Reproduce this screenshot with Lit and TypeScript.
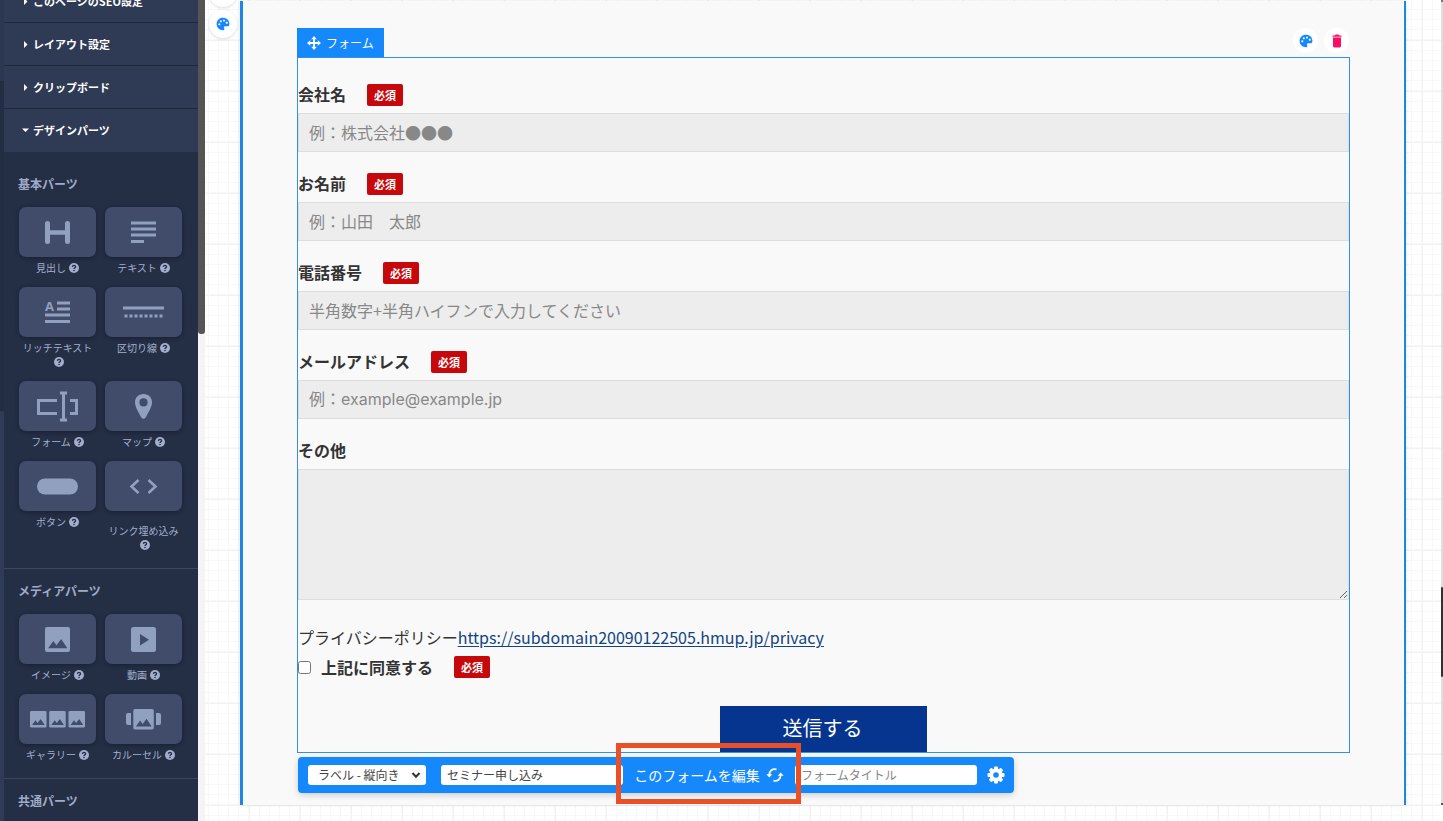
import { LitElement, html, svg, css, TemplateResult } from "lit";
import { customElement } from "lit/decorators.js";
import { classMap } from "lit/directives/class-map.js";

const JP = css`"Noto Sans CJK JP", "Liberation Sans", sans-serif`;

const picture = (x: number, y: number, s: number) => svg`
  <rect x=${x} y=${y} width=${s} height=${s} rx=${s / 12} fill="#92a0c0"></rect>
  <path transform="translate(${x} ${y}) scale(${s / 24})" d="M3 20.500 8 13.500 11 17.500 15.500 11.500 21.500 20.500Z" fill="#414c6b"></path>`;

const tileIcons: Record<string, TemplateResult> = {
  heading: svg`<path d="M28.500 16.500V34.500M48.500 16.500V34.500" stroke="#92a0c0" stroke-width="5" stroke-linecap="round"></path><path d="M28.500 25.500H48.500" stroke="#92a0c0" stroke-width="4.500"></path>`,
  text: svg`<path d="M26 16H51M26 22H51M26 28H51M26 34.500H39" stroke="#92a0c0" stroke-width="3"></path>`,
  rich: svg`<text x="26" y="23.500" class="glyph">A</text><path d="M38 16H51M38 22H51M26 28H51M26 34.500H51" stroke="#92a0c0" stroke-width="3"></path>`,
  divider: svg`<path d="M18 21H59" stroke="#92a0c0" stroke-width="3"></path><path d="M19.500 29H58" stroke="#92a0c0" stroke-width="3" stroke-dasharray="3 2"></path>`,
  form: svg`<path d="M38 19.500H19.500V32.500H38M51 19.500H57.500V32.500H51" stroke="#92a0c0" stroke-width="3" fill="none"></path><path d="M41 12H48M41 39H48M44.500 12V39" stroke="#92a0c0" stroke-width="3"></path>`,
  map: svg`<path fill-rule="evenodd" d="M38.500 13C33.500 13 30 16.500 30 21.500C30 25.500 33.500 31.500 36.300 36.500Q38.500 39 40.700 36.500C43.500 31.500 47 25.500 47 21.500C47 16.500 43.500 13 38.500 13ZM38.500 17.300A4.100 4.100 0 1 1 38.500 25.500A4.100 4.100 0 1 1 38.500 17.300Z" fill="#92a0c0"></path>`,
  button: svg`<rect x="18" y="17.500" width="41" height="16" rx="8" fill="#92a0c0"></rect>`,
  code: svg`<path d="M33.500 19 26.500 25.500 33.500 32M43.500 19 50.500 25.500 43.500 32" stroke="#92a0c0" stroke-width="2.600" fill="none"></path>`,
  image: picture(26, 13, 25),
  video: svg`<rect x="26" y="13" width="25" height="25" rx="2.500" fill="#92a0c0"></rect><path d="M35 20V31.500L44 25.700Z" fill="#414c6b"></path>`,
  gallery: svg`${picture(11, 17, 16.5)}${picture(30.2, 17, 16.5)}${picture(49.5, 17, 16.5)}`,
  carousel: svg`<path d="M26 19H23Q21 19 21 21V29Q21 31 23 31H26ZM51 19H54Q56 19 56 21V29Q56 31 54 31H51Z" fill="#92a0c0"></path>${picture(28.3, 15, 20.5)}`,
};

const palette = html`<svg class="palette" viewBox="0 0 14 14" aria-hidden="true"><path fill-rule="evenodd" d="M7 .8C3.200.8.600 3.500.600 7C.600 10.500 3.500 13.200 7 13.200C8.200 13.200 8.600 12.200 8.200 11.400C7.600 10.200 8 9.300 9.300 9.300H11.500C12.700 9.300 13.400 8.400 13.400 7C13.400 3.300 10.600.8 7 .8ZM3.300 6.200a1.050 1.050 0 1 0 .01 0ZM4.800 3.200a1.050 1.050 0 1 0 .01 0ZM8 2.500a1.050 1.050 0 1 0 .01 0ZM10.800 4.600a1.050 1.050 0 1 0 .01 0Z" fill="#1589fb"></path></svg>`;

const trash = html`<svg class="palette" viewBox="0 0 14 14" aria-hidden="true"><path d="M2.500 1.500H5L5.500.600H8.500L9 1.500H11.500V2.800H2.500ZM3 3.600H11V12Q11 13.400 9.600 13.400H4.400Q3 13.400 3 12Z" fill="#fb0d63"></path></svg>`;

interface Part { icon: string; label: string; low?: boolean }
interface Field { id: string; label: string; hint: string; latin?: boolean }

@customElement("part-tile")
export class PartTile extends LitElement {
  static properties = { icon: {}, label: {}, low: { type: Boolean } };
  declare icon: string;
  declare label: string;
  declare low: boolean;

  static styles = css`
    :host { display: block; }
    button {
      display: block; width: 100%; height: 50px; padding: 0; border: 0;
      border-radius: 7px; background: #414c6b; box-shadow: 0 1px 4px rgba(8, 14, 30, 0.45);
    }
    .art { display: block; width: 77px; height: 50px; margin: 0 auto; }
    .glyph { font: 700 13px "Open Sans", sans-serif; fill: #92a0c0; }
    .label {
      margin: 4px 0 0; color: #a3aecb; text-align: center;
      font: 400 10px/14px ${JP};
    }
    .label.low { margin-top: 13px; }
    .help { display: inline-block; width: 10px; height: 10px; margin-left: 3px; vertical-align: -1px; }
  `;

  render() {
    return html`
      <button type="button" aria-label=${this.label}>
        <svg class="art" viewBox="0 0 77 50" fill="none" aria-hidden="true">${tileIcons[this.icon]}</svg>
      </button>
      <p class=${classMap({ label: true, low: this.low })}>${this.label}<svg class="help" viewBox="0 0 10 10" aria-hidden="true"><circle cx="5" cy="5" r="5" fill="#a3aecb"></circle><path d="M3.400 3.900Q3.500 2.400 5 2.400T6.600 3.700Q6.600 4.400 5.700 4.900Q5 5.300 5 6" stroke="#242e45" stroke-width="1.300" fill="none"></path><circle cx="5" cy="7.500" r=".8" fill="#242e45"></circle></svg></p>`;
  }
}

@customElement("parts-sidebar")
export class PartsSidebar extends LitElement {
  private menus = ["このページのSEO設定", "レイアウト設定", "クリップボード", "デザインパーツ"];
  private groups: { title: string; parts: Part[] }[] = [
    {
      title: "基本パーツ",
      parts: [
        { icon: "heading", label: "見出し" },
        { icon: "text", label: "テキスト" },
        { icon: "rich", label: "リッチテキスト" },
        { icon: "divider", label: "区切り線" },
        { icon: "form", label: "フォーム" },
        { icon: "map", label: "マップ" },
        { icon: "button", label: "ボタン" },
        { icon: "code", label: "リンク埋め込み", low: true },
      ],
    },
    {
      title: "メディアパーツ",
      parts: [
        { icon: "image", label: "イメージ" },
        { icon: "video", label: "動画" },
        { icon: "gallery", label: "ギャラリー" },
        { icon: "carousel", label: "カルーセル" },
      ],
    },
    { title: "共通パーツ", parts: [] },
  ];

  static styles = css`
    :host { display: flex; height: 100%; overflow: hidden; background: #242e45; font-family: ${JP}; }
    .edge { width: 4px; background: linear-gradient(#2b3751 0 81px, #222c43 81px 411px, #2f3b57 411px); }
    .content { width: 194px; }
    .menus { margin-top: -20px; }
    .menu {
      display: flex; align-items: center; gap: 4px; width: 100%; height: 43px;
      padding: 0 0 0 18px; border: 0; border-bottom: 1px solid #202738;
      background: #2f3a55; color: #fff; font: 700 11px/16px ${JP};
    }
    .menu:last-child { border-bottom-color: #2f3a55; }
    .caret { width: 7px; height: 7px; }
    .group { padding: 13px 16px 16px 15px; border-top: 1px solid #3a4663; }
    .group:first-of-type { padding-top: 23px; border-top: 0; }
    h2 { margin: 0 0 14px -1px; color: #a0abc8; font: 700 12px/18px ${JP}; }
    .tiles { display: grid; grid-template-columns: 1fr 1fr; gap: 12px 9px; }
    .track { width: 7px; background: #f4f4f4; }
    .thumb { height: 334px; background: #555; border-radius: 0 0 3px 3px; }
  `;

  render() {
    return html`
      <div class="edge"></div>
      <div class="content">
        <nav class="menus">
          ${this.menus.map((m, i) => html`
            <button class="menu" type="button">
              <svg class="caret" viewBox="0 0 7 7" aria-hidden="true"><path d=${i === 3 ? "M0 1.500H7L3.500 5Z" : "M2 0V7L5.500 3.500Z"} fill="#fff"></path></svg>${m}
            </button>`)}
        </nav>
        ${this.groups.map((g) => html`
          <section class="group">
            <h2>${g.title}</h2>
            <div class="tiles">
              ${g.parts.map((p) => html`<part-tile .icon=${p.icon} .label=${p.label} .low=${!!p.low}></part-tile>`)}
            </div>
          </section>`)}
      </div>
      <div class="track"><div class="thumb"></div></div>`;
  }
}

@customElement("form-toolbar")
export class FormToolbar extends LitElement {
  static styles = css`
    :host { display: flex; }
    .bar {
      position: relative; display: flex; align-items: center; height: 36px; padding-left: 10px;
      border-radius: 4px; background: #1589fb; box-shadow: 0 2px 6px rgba(0, 0, 0, 0.18);
    }
    .pick { position: relative; display: flex; margin-right: 15px; }
    select, input {
      box-sizing: border-box; height: 20px; border: 0; border-radius: 3px; background: #fff;
      color: #444; font: 400 12px/20px ${JP}; outline: 0;
    }
    select { width: 118px; padding: 0 20px 0 10px; appearance: none; }
    input { width: 182px; padding: 0 6px; }
    input::placeholder { color: #858585; opacity: 1; }
    .chevron { position: absolute; right: 5px; top: 6px; width: 10px; height: 8px; pointer-events: none; }
    .edit { position: relative; }
    .edit-button {
      display: flex; align-items: center; justify-content: center; gap: 6px; width: 172px; height: 36px;
      padding: 0; border: 0; background: none; color: #fff; font: 400 14px/20px ${JP};
    }
    .mark { position: absolute; z-index: 1; inset: -14px -6px -11px -7px; border: 5px solid #ea4f28; pointer-events: none; }
    .sync { width: 18px; height: 16px; }
    .gear-button { display: flex; align-items: center; justify-content: center; width: 37px; height: 36px; padding: 0; border: 0; background: none; }
    .gear { width: 18px; height: 18px; }
  `;

  render() {
    return html`
      <div class="bar">
        <span class="pick">
          <select aria-label="ラベルの向き"><option>ラベル - 縦向き</option></select>
          <svg class="chevron" viewBox="0 0 10 8" aria-hidden="true"><path d="M1.500 2 5 5.800 8.500 2" fill="none" stroke="#333" stroke-width="2"></path></svg>
        </span>
        <input type="text" aria-label="フォーム名" .value=${"セミナー申し込み"} />
        <span class="edit">
          <button class="edit-button" type="button">このフォームを編集<svg class="sync" viewBox="0 0 18 16" aria-hidden="true"><path d="M10.500 2.400C6.500 1.300 3.200 4 3.300 8M7.500 13.600C11.500 14.700 14.800 12 14.700 8" fill="none" stroke="#fff" stroke-width="1.700"></path><path d="M.3 7.200H6.300L3.300 10.400ZM11.700 8.800H17.700L14.700 5.600Z" fill="#fff"></path></svg></button>
          <span class="mark"></span>
        </span>
        <input type="text" aria-label="フォームタイトル" placeholder="フォームタイトル" />
        <button class="gear-button" type="button" aria-label="設定">
          <svg class="gear" viewBox="0 0 18 18" aria-hidden="true">
            <g fill="#fff">${[0, 45, 90, 135].map((a) => svg`<rect x="7" y="0.500" width="4" height="17" rx="1" transform="rotate(${a} 9 9)"></rect>`)}<circle cx="9" cy="9" r="6.500"></circle></g>
            <circle cx="9" cy="9" r="2.800" fill="#1589fb"></circle>
          </svg>
        </button>
      </div>`;
  }
}

@customElement("form-canvas")
export class FormCanvas extends LitElement {
  private fields: Field[] = [
    { id: "company", label: "会社名", hint: "例：株式会社●●●" },
    { id: "name", label: "お名前", hint: "例：山田　太郎" },
    { id: "tel", label: "電話番号", hint: "半角数字+半角ハイフンで入力してください" },
    { id: "mail", label: "メールアドレス", hint: "例：example@example.jp", latin: true },
  ];

  static styles = css`
    :host {
      display: flex; align-items: flex-start; flex: 1; min-width: 0; height: 100%; overflow: hidden;
      font-family: ${JP}; color: #333; background-color: #fff;
      background-image:
        linear-gradient(#f2f2f2 1px, transparent 1px),
        linear-gradient(90deg, #f2f2f2 1px, transparent 1px),
        repeating-linear-gradient(#f8f8f8 0 1px, transparent 1px 10px),
        repeating-linear-gradient(90deg, #f8f8f8 0 1px, transparent 1px 10px);
      background-size: 51px 51px;
      background-position: 44px 40px;
    }
    .gutter { display: flex; flex-direction: column; align-items: center; gap: 3px; width: 35px; margin-top: -21px; }
    .round {
      display: flex; align-items: center; justify-content: center; width: 25px; height: 25px; padding: 0;
      border: 0; border-radius: 50%; background: #fff;
    }
    .gutter .round { width: 28px; height: 28px; box-shadow: 0 1px 3px rgba(0, 0, 0, 0.14); }
    .palette { width: 14px; height: 14px; }
    .panel {
      flex: 1; min-width: 0; margin: 1px 35px 0 0; padding: 27px 54px 12px;
      border: solid #1f86e6; border-width: 0 2px 0 3px; background: #f9f9f9;
      box-shadow: 0 0 3px rgba(0, 0, 0, 0.12);
    }
    .head { display: flex; align-items: flex-start; justify-content: space-between; height: 29px; }
    .tab {
      display: flex; align-items: center; gap: 5px; height: 29px; padding: 0 10px; border: 0;
      background: #1589fb; color: #fff; font: 400 12px/18px ${JP};
    }
    .move { width: 14px; height: 14px; }
    .tools { display: flex; gap: 6px; padding-right: 1px; }
    .box { padding-top: 26px; border: 1px solid #2f92ea; }
    .row { margin-bottom: 21px; }
    .caption { display: flex; align-items: center; gap: 21px; height: 22px; margin-bottom: 7px; font: 700 16px/22px ${JP}; }
    .caption label { padding-bottom: 2px; }
    .badge { padding: 0 7px; border-radius: 2px; background: #c7080a; color: #fff; font: 700 11px/22px ${JP}; }
    .field {
      display: block; box-sizing: border-box; width: 100%; height: 39px; padding: 0 10px 2px; border: 1px solid #ddd;
      background: #ededed; color: #333; font: 400 16px/24px ${JP}; outline: 0;
    }
    .field::placeholder { color: #888; opacity: 1; }
    .latin { font-family: "Inter", ${JP}; }
    textarea.field { height: 131px; resize: both; }
    .privacy { margin: 25px 0 7px; font: 400 16px/24px ${JP}; }
    .privacy a { color: #0f4485; text-underline-offset: 2px; }
    .agree { display: flex; align-items: center; height: 22px; font: 700 16px/22px ${JP}; }
    .agree input { width: 13px; height: 13px; margin: 0 10px 0 0; }
    .agree .badge { margin-left: 21px; }
    .send {
      display: block; width: 207px; height: 46px; margin: 28px auto 0; padding: 0 2px 2px 0; border: 0;
      background: #06358f; color: #fff; font: 400 20px/28px ${JP};
    }
    form-toolbar { margin: 4px 0 0 1px; }
  `;

  private badge = html`<span class="badge">必須</span>`;

  render() {
    return html`
      <div class="gutter">
        <button class="round" type="button" aria-label="操作"></button>
        <button class="round" type="button" aria-label="配色">${palette}</button>
      </div>
      <main class="panel">
        <div class="head">
          <button class="tab" type="button">
            <svg class="move" viewBox="0 0 14 14" aria-hidden="true"><path d="M7 1V13M1 7H13" stroke="#fff" stroke-width="1.800"></path><path d="M7 0 9.800 3.200H4.200ZM7 14 9.800 10.800H4.200ZM0 7 3.200 4.200V9.800ZM14 7 10.800 4.200V9.800Z" fill="#fff"></path></svg>フォーム
          </button>
          <div class="tools">
            <button class="round" type="button" aria-label="配色">${palette}</button>
            <button class="round" type="button" aria-label="削除">${trash}</button>
          </div>
        </div>
        <form class="box" @submit=${(e: Event) => e.preventDefault()}>
          ${this.fields.map((f) => html`
            <div class="row">
              <div class="caption"><label for=${f.id}>${f.label}</label>${this.badge}</div>
              <input class=${classMap({ field: true, latin: !!f.latin })} id=${f.id} type="text" placeholder=${f.hint} />
            </div>`)}
          <div class="caption"><label for="other">その他</label></div>
          <textarea class="field" id="other"></textarea>
          <p class="privacy">プライバシーポリシー<a href="https://subdomain20090122505.hmup.jp/privacy">https://subdomain20090122505.hmup.jp/privacy</a></p>
          <div class="agree"><input id="agree" type="checkbox" /><label for="agree">上記に同意する</label>${this.badge}</div>
          <button class="send" type="submit">送信する</button>
        </form>
        <form-toolbar></form-toolbar>
      </main>`;
  }
}

@customElement("app-root")
export class AppRoot extends LitElement {
  static styles = css`
    :host { display: flex; height: 100vh; overflow: hidden; background: #fff; }
    .scroll { display: flex; flex-direction: column; width: 2px; height: 805px; background: #dedede; border-top: 2px solid #777; box-sizing: border-box; border-bottom: 2px solid #555; }
    .thumb { height: 90px; margin-top: 585px; border-radius: 2px; background: #333; }
  `;

  render() {
    return html`<parts-sidebar></parts-sidebar><form-canvas></form-canvas><div class="scroll"><div class="thumb"></div></div>`;
  }
}
